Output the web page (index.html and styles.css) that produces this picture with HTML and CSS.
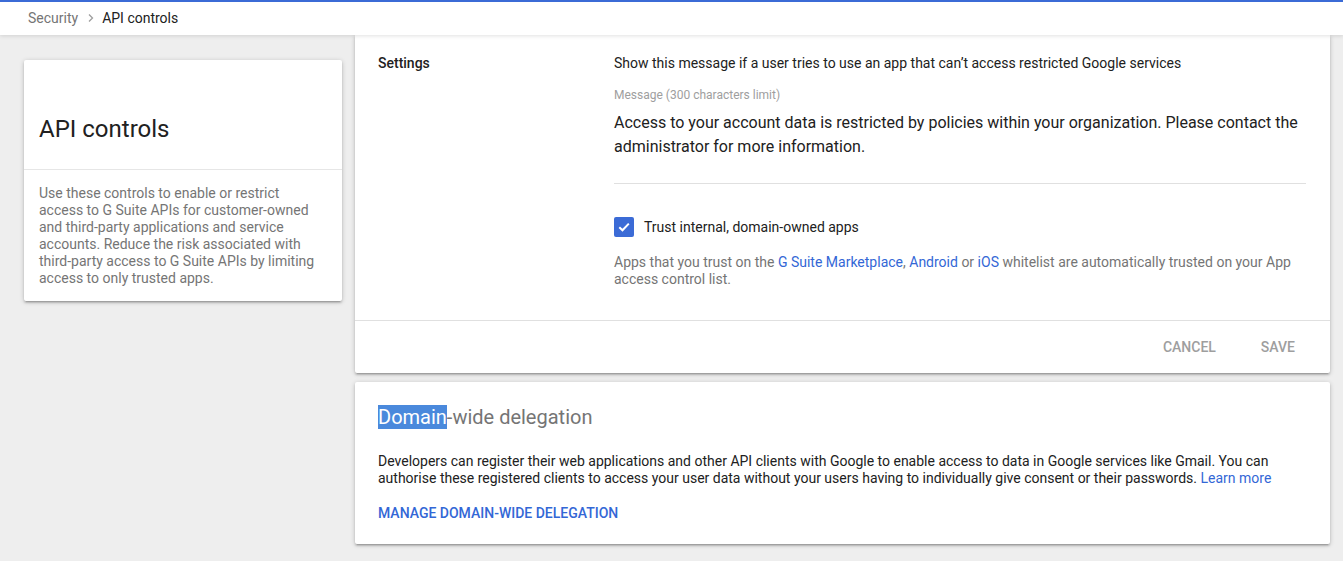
FILE: index.html
```html
<!DOCTYPE html>
<html>
<head>
<meta charset="utf-8">
<link rel="stylesheet" href="styles.css">
</head>
<body>
<header class="topbar">
  <nav class="crumbs">
    <span class="crumb-parent">Security</span>
    <svg class="crumb-sep" width="8" height="10" viewBox="0 0 8 10"><path d="M2 1.5 L5.5 5 L2 8.5" fill="none" stroke="#9e9e9e" stroke-width="1.3"/></svg>
    <span class="crumb-current">API controls</span>
  </nav>
</header>
<main class="layout">
  <aside class="side">
    <div class="card side-card">
      <h1 class="side-title">API controls</h1>
      <p class="side-desc">Use these controls to enable or restrict access to G Suite APIs for customer-owned and third-party applications and service accounts. Reduce the risk associated with third-party access to G Suite APIs by limiting access to only trusted apps.</p>
    </div>
  </aside>
  <section class="content">
    <div class="card settings-card">
      <div class="settings-body">
        <div class="settings-label">Settings</div>
        <div class="settings-main">
          <div class="intro">Show this message if a user tries to use an app that can’t access restricted Google services</div>
          <div class="field-label">Message (300 characters limit)</div>
          <div class="field-value">Access to your account data is restricted by policies within your organization. Please contact the administrator for more information.</div>
          <div class="check-row">
            <span class="checkbox"><svg width="14" height="14" viewBox="0 0 14 14"><path d="M2.3 7.2 L5.5 10.3 L11.8 3.6" fill="none" stroke="#fff" stroke-width="2"/></svg></span>
            <span class="check-label">Trust internal, domain-owned apps</span>
          </div>
          <p class="help">Apps that you trust on the <a class="link">G Suite Marketplace</a>, <a class="link">Android</a> or <a class="link">iOS</a> whitelist are automatically trusted on your App access control list.</p>
        </div>
      </div>
      <div class="actions">
        <button class="btn">CANCEL</button>
        <button class="btn">SAVE</button>
      </div>
    </div>
    <div class="card delegation-card">
      <h2 class="del-title"><span class="sel">Domain</span>-wide delegation</h2>
      <p class="del-desc">Developers can register their web applications and other API clients with Google to enable access to data in Google services like Gmail. You can authorise these registered clients to access your user data without your users having to individually give consent or their passwords. <a class="link">Learn more</a></p>
      <a class="del-action">MANAGE DOMAIN-WIDE DELEGATION</a>
    </div>
  </section>
</main>
</body>
</html>
```
FILE: styles.css
```css
* { box-sizing: border-box; }
html, body { margin: 0; padding: 0; }
body {
  background: #eeeeee;
  font-family: Roboto, "Liberation Sans", Arial, sans-serif;
  color: #212121;
  height: 561px;
  overflow: hidden;
}
.topbar {
  position: relative;
  z-index: 2;
  height: 35px;
  background: #fff;
  border-top: 2px solid #3b6bd6;
  box-shadow: 0 1px 4px rgba(0,0,0,0.12);
  display: flex;
  align-items: center;
  padding-left: 28px;
}
.crumbs { display: flex; align-items: center; font-size: 14px; line-height: 20px; margin-top: -1px; }
.crumb-parent { color: #757575; }
.crumb-sep { margin: 0 7px 0 9px; }
.crumb-current { color: #212121; }
.layout {
  display: flex;
  gap: 13px;
  padding: 0 13px 0 24px;
}
.side { width: 318px; flex: none; padding-top: 25px; }
.card {
  background: #fff;
  border-radius: 2px;
  box-shadow: 0 2px 2px 0 rgba(0,0,0,0.14), 0 3px 1px -2px rgba(0,0,0,0.12), 0 1px 5px 0 rgba(0,0,0,0.2);
}
.side-title {
  margin: 0;
  font-size: 24px;
  font-weight: 400;
  line-height: 32px;
  padding: 53px 15px 24px;
  border-bottom: 1px solid #e6e6e6;
  color: #212121;
}
.side-desc {
  margin: 0;
  padding: 15px 25px 14px 15px;
  font-size: 14px;
  line-height: 17px;
  color: #757575;
}
.content { flex: 1; display: flex; flex-direction: column; gap: 9px; }
.settings-card { border-radius: 0 0 2px 2px; }
.settings-body { display: flex; padding: 18px 24px 32px 23px; border-bottom: 1px solid #e0e0e0; }
.settings-label { width: 236px; flex: none; font-size: 14px; font-weight: 500; line-height: 20px; color: #212121; }
.settings-main { flex: 1; }
.intro { font-size: 14px; line-height: 20px; color: #212121; }
.field-label { margin-top: 14px; font-size: 12px; line-height: 16px; color: #9e9e9e; }
.field-value {
  margin-top: 8px;
  font-size: 16px;
  line-height: 24px;
  padding-bottom: 24px;
  border-bottom: 1px solid #e0e0e0;
  color: #212121;
}
.check-row { display: flex; align-items: center; margin-top: 33px; height: 20px; }
.checkbox {
  width: 20px; height: 20px;
  border-radius: 2px;
  background: #3b6bd6;
  display: flex; align-items: center; justify-content: center;
  margin-right: 10px;
}
.check-label { font-size: 14px; line-height: 20px; color: #212121; }
.help { margin: 17px 0 0; font-size: 14px; line-height: 17px; color: #757575; }
.link { color: #3367d6; text-decoration: none; }
.actions { display: flex; justify-content: flex-end; gap: 13px; height: 52px; align-items: center; padding-right: 19px; }
.btn {
  background: none; border: none;
  font-family: Roboto, "Liberation Sans", Arial, sans-serif;
  font-size: 14px; font-weight: 500;
  color: #9e9e9e;
  padding: 0 16px;
  line-height: 36px;
}
.delegation-card { padding: 21px 24px 21px 23px; }
.del-title { margin: 0; font-size: 20px; font-weight: 400; line-height: 28px; color: #757575; }
.sel { background: #4a89dc; color: #fff; }
.del-desc { margin: 22px 0 0; font-size: 14px; line-height: 17px; color: #212121; }
.del-action { display: block; margin-top: 16px; font-size: 14px; font-weight: 500; line-height: 20px; color: #3367d6; }
```
